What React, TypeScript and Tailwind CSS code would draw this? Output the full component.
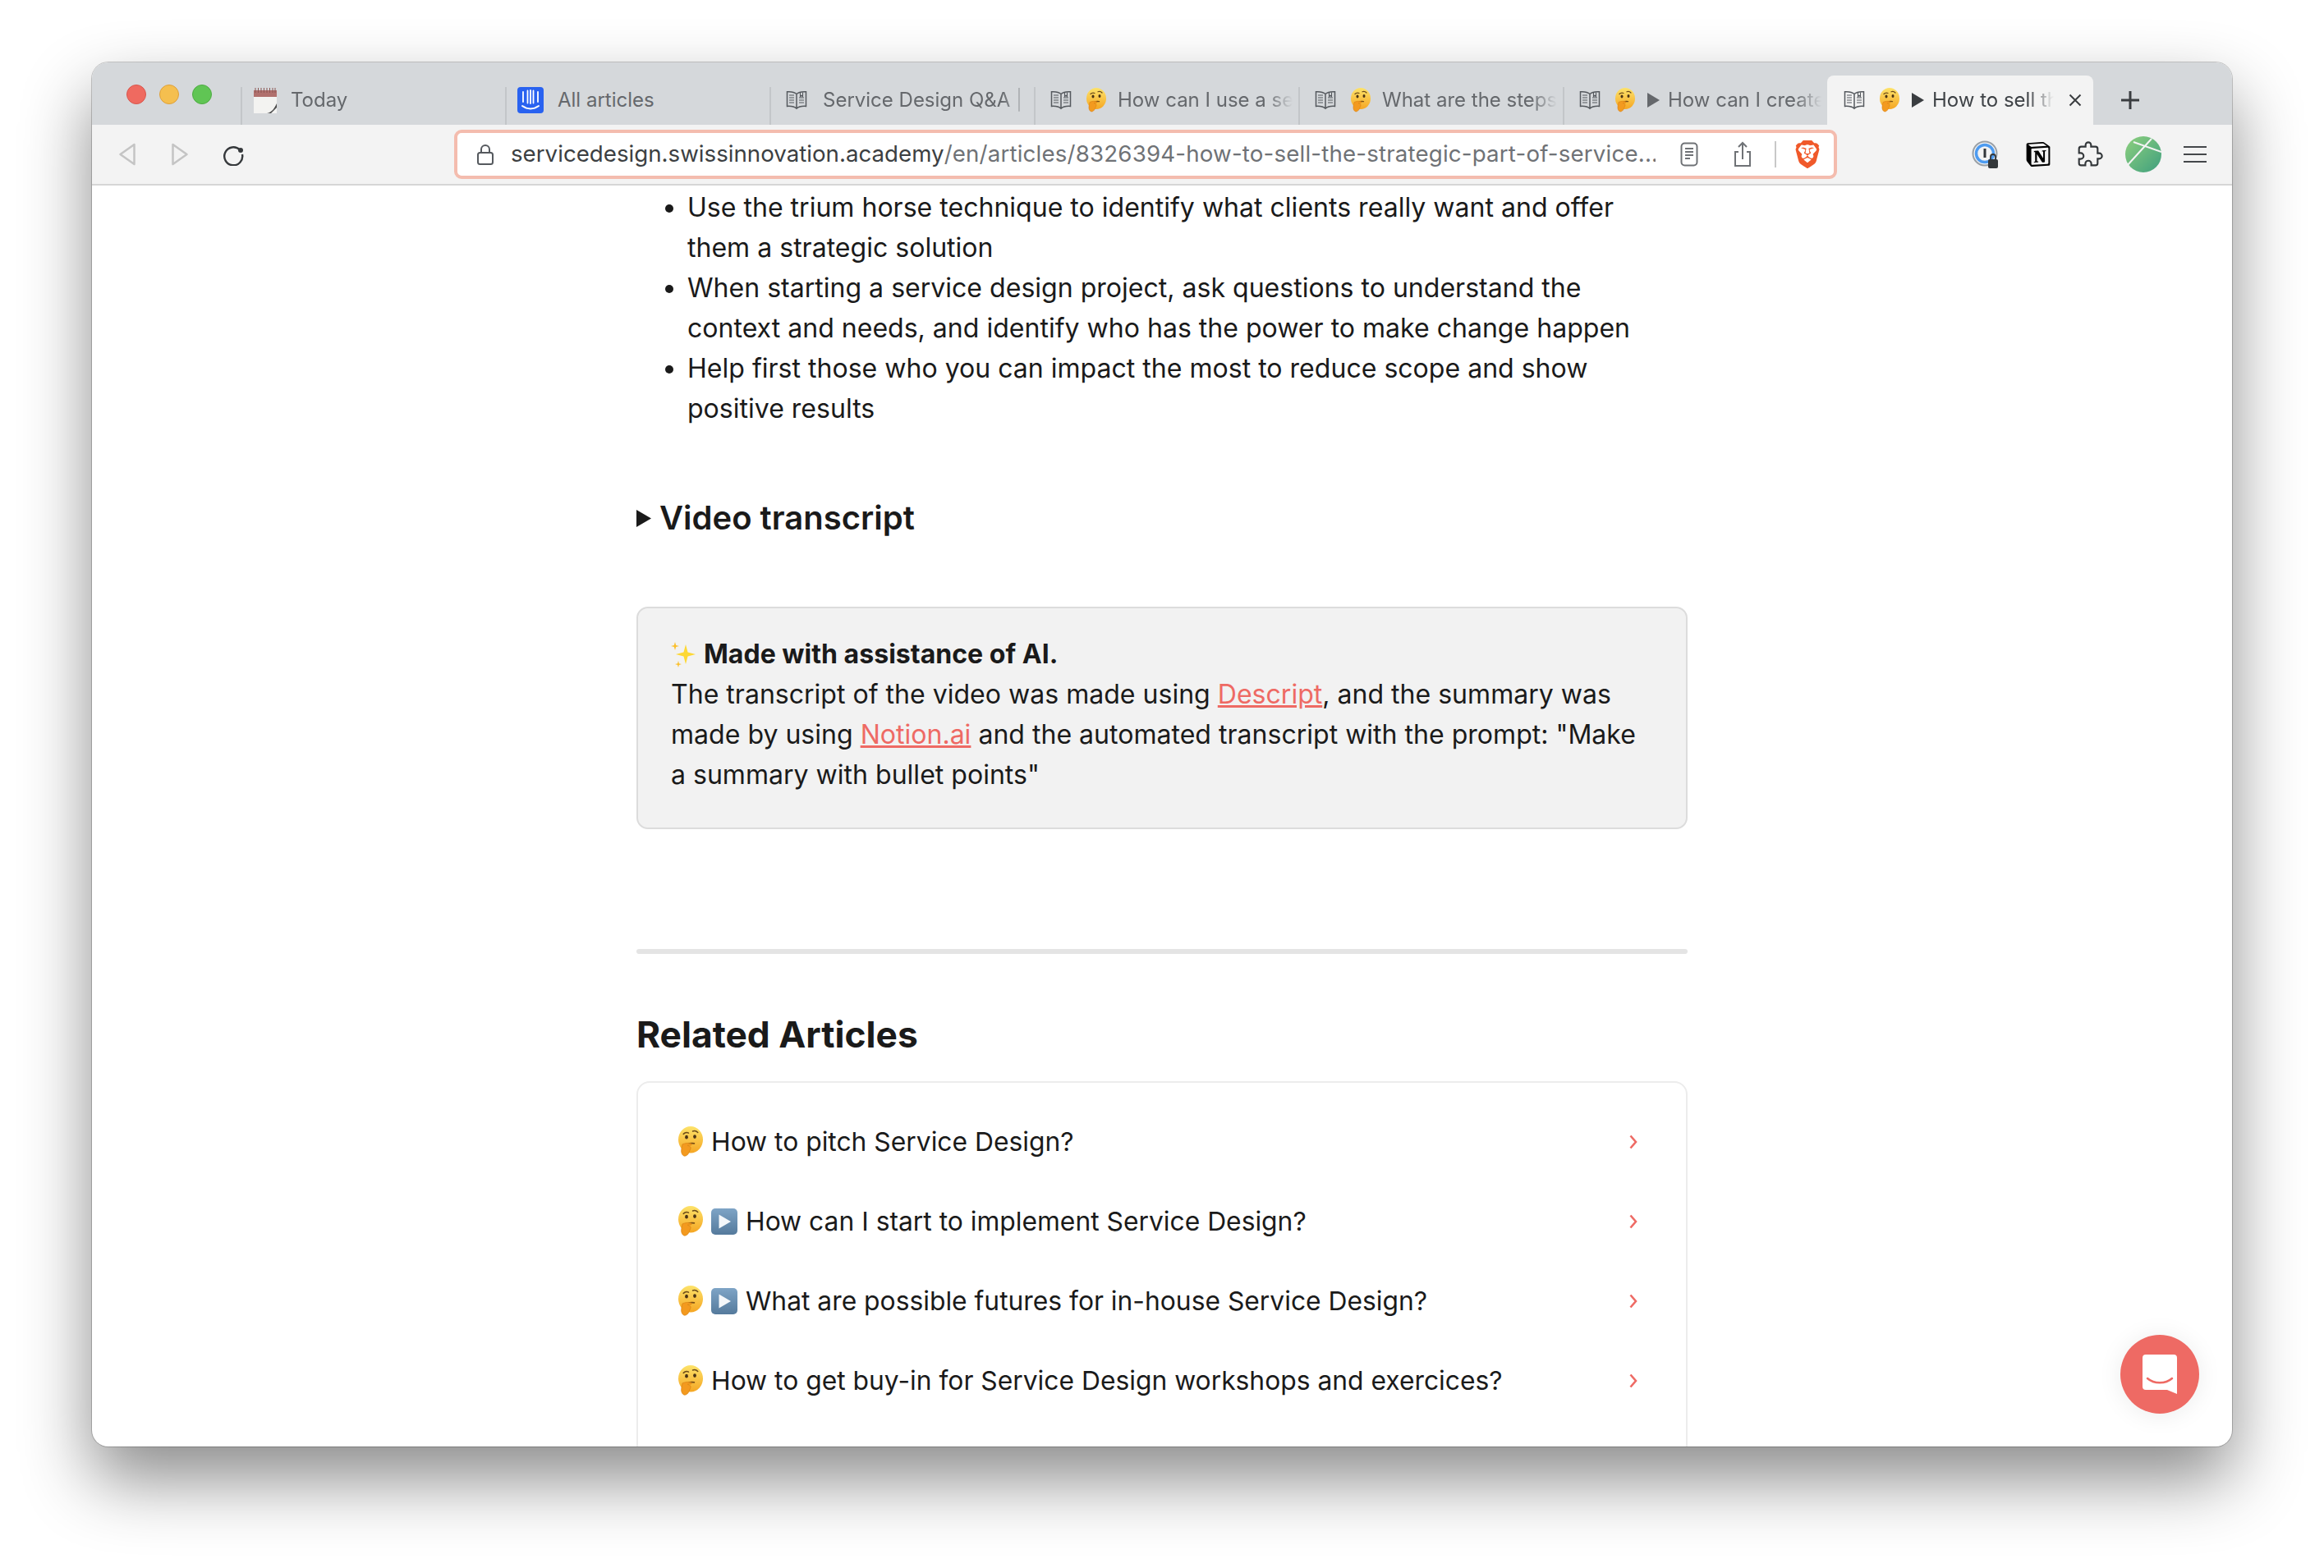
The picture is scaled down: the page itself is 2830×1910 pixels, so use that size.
import { SiBrave, SiNotion } from "react-icons/si";

function Book() {
  return (
    <svg width="26" height="24" viewBox="0 0 26 24" fill="none" stroke="#55595e" strokeWidth="1.5" className="shrink-0">
      <path d="M13 4.5C10.5 2.2 6 1.5 1.5 1.8v17.6c4.5-.3 9 .4 11.5 2.8 2.5-2.4 7-3.1 11.5-2.8V1.8C20 1.5 15.5 2.2 13 4.5zM13 4.5v17.7" />
      <path d="M4 6h6M4 9h6M4 12h6M4 15h6M16 9h6M16 12h6M16 15h6" strokeWidth="1.2" />
      <path d="M17.5 2.5v5l1.5-1.2 1.5 1.2v-5" strokeWidth="1.1" />
    </svg>
  );
}

function Thinking({ size = 24 }: { size?: number }) {
  return (
    <svg width={size} height={size * 1.25} viewBox="0 0 24 30" className="shrink-0">
      <defs>
        <linearGradient id="faceGrad" x1="0" y1="0" x2="0" y2="1">
          <stop offset="0" stopColor="#fde36a" />
          <stop offset="1" stopColor="#f5a623" />
        </linearGradient>
      </defs>
      <ellipse cx="12" cy="13" rx="12" ry="13" fill="url(#faceGrad)" />
      <path d="M5 7.5c1.5-1.6 3.2-1.8 5-1M14 4.8c2-.8 3.6-.3 5 1.2" stroke="#6b4a1a" strokeWidth="1.2" fill="none" strokeLinecap="round" />
      <ellipse cx="8" cy="10.5" rx="1.5" ry="1.9" fill="#4a3315" />
      <ellipse cx="16" cy="10" rx="1.5" ry="1.9" fill="#4a3315" />
      <path d="M9 17.5c2-1 4-1.2 6.5-.8" stroke="#7b4f16" strokeWidth="1.3" fill="none" strokeLinecap="round" />
      <path d="M4 17.5c2.5-1.2 6-1.6 8.5-.7.9.4.5 1.6-.5 1.6l-3 .1 2.4 1.2c1 .5.8 1.7.3 2.6l-1.4 3.4c-.8 1.9-2.6 3.3-4.2 3.3C4 28.5 2.5 26 3 22.5z" fill="#f39a1f" stroke="#d67f12" strokeWidth=".5" />
    </svg>
  );
}

function PlayBox() {
  return (
    <svg width="32" height="32" viewBox="0 0 32 32" className="shrink-0">
      <defs>
        <linearGradient id="playGrad" x1="0" y1="0" x2="0" y2="1">
          <stop offset="0" stopColor="#7ea4c6" />
          <stop offset="1" stopColor="#557a9c" />
        </linearGradient>
      </defs>
      <rect x="0" y="0" width="32" height="32" rx="5" fill="url(#playGrad)" />
      <path d="M9.5 7.5 24 16 9.5 24.5z" fill="#f4f7fa" />
    </svg>
  );
}

function Tab({
  icon, title, thinking, play, active
}: { icon?: React.ReactNode; title: string; thinking?: boolean; play?: boolean; active?: boolean }) {
  return (
    <div className={active
      ? "w-[324px] h-[60px] bg-[#f3f3f3] rounded-t-[8px] flex items-center pl-[20px] pr-[14px] text-[#3f4347] shrink-0"
      : "w-[322px] h-[46px] border-l-2 border-[#c3c6c9] flex items-center pl-[18px] pr-[7px] pb-[14px] text-[#65686c] shrink-0 first:border-transparent"}>
      {icon ?? <Book />}
      {thinking && <span className="ml-[18px]"><Thinking /></span>}
      {play && (
        <svg width="15" height="20" viewBox="0 0 15 20" className="ml-[15px] shrink-0">
          <path d="M0 1 15 10 0 19z" fill={active ? "#3a3d40" : "#65686c"} />
        </svg>
      )}
      <span className={`${play ? "ml-[10px]" : thinking ? "ml-[14px]" : "ml-[19px]"} flex-1 overflow-hidden whitespace-nowrap text-[24px] [mask-image:linear-gradient(to_left,transparent,black_32px)]`}>
        {title}
      </span>
      {active && (
        <svg width="16" height="16" viewBox="0 0 16 16" className="ml-[18px] shrink-0">
          <path d="M1.5 1.5 14.5 14.5M14.5 1.5 1.5 14.5" stroke="#3a3d40" strokeWidth="2" />
        </svg>
      )}
    </div>
  );
}

function Related({ text, play }: { text: string; play?: boolean }) {
  return (
    <div className="h-[97px] flex items-center pl-[49px] pr-[59px] gap-[10px] text-[31.8px]">
      <Thinking size={30} />
      {play && <PlayBox />}
      <span className="flex-1">{text}</span>
      <svg width="10" height="18" viewBox="0 0 10 18" fill="none" stroke="#ee6a64" strokeWidth="2.6" className="shrink-0">
        <path d="M1.5 1.5 8 9l-6.500 7.500" />
      </svg>
    </div>
  );
}

export default function App() {
  return (
    <div className="w-[2830px] h-[1910px] bg-white pt-[76px] pl-[112px] overflow-hidden font-['Inter',sans-serif]">
      <div className="relative w-[2606px] h-[1686px] rounded-[20px] overflow-hidden flex flex-col bg-white shadow-[0_40px_84px_rgba(0,0,0,0.46),0_0_0_1px_rgba(0,0,0,0.2)]">
        {/* tab strip */}
        <div className="h-[76px] bg-[#d5d8db] flex items-end shrink-0">
          <div className="w-[181px] self-center flex items-center gap-[16px] pl-[42px] mt-[2px] shrink-0">
            <span className="w-6 h-6 rounded-full bg-[#ef6a60] border border-[#d9564d]" />
            <span className="w-6 h-6 rounded-full bg-[#f5bf4f] border border-[#dea03a]" />
            <span className="w-6 h-6 rounded-full bg-[#60c554] border border-[#4eab43]" />
          </div>
          <Tab title="Today" icon={
            <svg width="28" height="32" viewBox="0 0 28 32" className="shrink-0 ml-[-4px] mr-[-2px]">
              <rect x="0" y="5" width="28" height="27" fill="#f3f3f1" />
              <rect x="0" y="4" width="28" height="8" fill="#b0706d" />
              <path d="M2 1v6M5.500 1v6M9 1v6M12.500 1v6M16 1v6M19.500 1v6M23 1v6M26 1v6" stroke="#8a5553" strokeWidth="1" />
              <path d="M16 32c6-1 9-6 12-12v5l-7 7z" fill="#4d4d4d" />
            </svg>
          } />
          <div className="w-[322px] h-[46px] border-l-2 border-[#c3c6c9] flex items-center pl-[13px] pb-[14px] text-[#65686c] shrink-0">
            <svg width="32" height="32" viewBox="0 0 32 32" className="shrink-0">
              <rect width="32" height="32" rx="4" fill="#2962f0" />
              <path d="M7 6v12M12.500 4.500v15M19.500 4.500v15M25 6v12M16 4v16" stroke="#fff" strokeWidth="1.8" strokeLinecap="round" />
              <path d="M6 23c6 4.500 14 4.500 20 0" stroke="#fff" strokeWidth="2" fill="none" strokeLinecap="round" />
            </svg>
            <span className="ml-[17px] text-[24px]">All articles</span>
          </div>
          <Tab title="Service Design Q&A | Service" />
          <Tab title="How can I use a service" thinking />
          <Tab title="What are the steps to" thinking />
          <Tab title="How can I create a" thinking play />
          <Tab title="How to sell the" thinking play active />
          <svg width="24" height="24" viewBox="0 0 24 24" className="ml-[33px] mb-[18px] shrink-0">
            <path d="M12 1v22M1 12h22" stroke="#3a3d40" strokeWidth="3" />
          </svg>
        </div>

        {/* toolbar */}
        <div className="h-[74px] bg-[#f3f3f3] border-b-2 border-[#d6d6d6] flex items-center shrink-0 pb-[1px]">
          <div className="w-[441px] flex items-center pl-[32px] shrink-0">
            <svg width="22" height="28" viewBox="0 0 22 28" fill="none" stroke="#c4c4c4" strokeWidth="2.5" strokeLinejoin="round">
              <path d="M19.500 2 2.500 14l17 12z" />
            </svg>
            <svg width="22" height="28" viewBox="0 0 22 28" fill="none" stroke="#c4c4c4" strokeWidth="2.5" strokeLinejoin="round" className="ml-[42px]">
              <path d="M2.500 2l17 12-17 12z" />
            </svg>
            <svg width="28" height="28" viewBox="0 0 28 28" fill="none" className="ml-[40px]">
              <path d="M22 8.500A11 11 0 1 0 25 14" stroke="#36393c" strokeWidth="2.4" />
              <circle cx="23" cy="9" r="3" fill="#36393c" />
            </svg>
          </div>
          <div className="w-[1684px] h-[60px] bg-white border-[4px] border-[#f4bcae] rounded-[9px] flex items-center pl-[23px] shrink-0">
            <svg width="22" height="26" viewBox="0 0 22 26" fill="none" stroke="#55595e" strokeWidth="2" className="shrink-0">
              <rect x="2" y="11" width="18" height="14" rx="2.500" />
              <path d="M6 11V7a5 5 0 0 1 10 0v4" />
            </svg>
            <div className="ml-[20px] w-[1394px] text-[27.7px] whitespace-nowrap overflow-hidden text-[#3c3f42]">
              servicedesign.swissinnovation.academy<span className="text-[#6f7276] tracking-[0.17px]">/en/articles/8326394-how-to-sell-the-strategic-part-of-service...</span>
            </div>
            <svg width="22" height="30" viewBox="0 0 22 30" fill="none" stroke="#6f7276" strokeWidth="2" className="ml-[30px] shrink-0">
              <rect x="1.500" y="1.500" width="19" height="27" rx="4" />
              <path d="M6 8h10M6 12h10M6 16h10M6 20h6" />
            </svg>
            <svg width="22" height="32" viewBox="0 0 22 32" fill="none" stroke="#6f7276" strokeWidth="2" className="ml-[43px] shrink-0">
              <path d="M6 13H2v17h18V13h-4M11 22V2M6 7l5-5 5 5" />
            </svg>
            <div className="ml-[28px] w-[2px] h-[32px] bg-[#c8c8c8] shrink-0" />
            <SiBrave size={34} className="ml-[21px] text-[#f0592a] shrink-0" />
          </div>
          <div className="flex items-center ml-[164px]">
            <svg width="34" height="36" viewBox="0 0 34 36" fill="none" className="shrink-0">
              <circle cx="16" cy="17" r="14.500" stroke="#9aa0a6" strokeWidth="2" />
              <circle cx="16" cy="17" r="10.500" stroke="#4d9bf0" strokeWidth="3.500" />
              <path d="M16 11v11" stroke="#33373a" strokeWidth="3" />
              <rect x="20" y="24" width="12" height="11" rx="2" fill="#33373a" />
              <path d="M23 24v-3a3 3 0 0 1 6 0v3" stroke="#33373a" strokeWidth="1.800" />
            </svg>
            <SiNotion size={30} className="ml-[32px] text-black shrink-0" />
            <svg width="32" height="32" viewBox="0 0 24 24" fill="none" stroke="#33373a" strokeWidth="1.600" className="ml-[32px] shrink-0">
              <path d="M20.500 11H19V7c0-1.100-.9-2-2-2h-4V3.500C13 2.120 11.880 1 10.500 1S8 2.120 8 3.500V5H4c-1.100 0-1.990.9-1.990 2v3.800H3.500c1.490 0 2.700 1.210 2.700 2.700s-1.210 2.700-2.700 2.700H2V20c0 1.100.9 2 2 2h3.800v-1.500c0-1.490 1.210-2.700 2.700-2.700 1.490 0 2.700 1.210 2.700 2.700V22H17c1.100 0 2-.9 2-2v-4h1.500c1.380 0 2.500-1.120 2.500-2.500S21.880 11 20.500 11z" />
            </svg>
            <svg width="44" height="44" viewBox="0 0 44 44" className="ml-[27px] shrink-0">
              <defs>
                <linearGradient id="avatarGrad" x1="0" y1="0" x2="1" y2="1">
                  <stop offset="0" stopColor="#8ed07e" />
                  <stop offset="1" stopColor="#3f9f7e" />
                </linearGradient>
              </defs>
              <circle cx="22" cy="22" r="22" fill="url(#avatarGrad)" />
              <path d="M10 7 44 19M32 3 2 36" stroke="#f3f3f3" strokeWidth="2" />
            </svg>
            <svg width="28" height="22" viewBox="0 0 28 22" className="ml-[27px] shrink-0">
              <path d="M0 2h28M0 11h28M0 20h28" stroke="#44474a" strokeWidth="2.200" />
            </svg>
          </div>
        </div>

        {/* page */}
        <div className="flex-1 overflow-hidden">
          <div className="mx-auto w-[1280px] text-[#1a1a1a] text-[32.05px] leading-[49px]">
            <ul className="list-disc pl-[62px] pt-[2px] w-[1241px]">
              <li>Use the trium horse technique to identify what clients really want and offer them a strategic solution</li>
              <li>When starting a service design project, ask questions to understand the context and needs, and identify who has the power to make change happen</li>
              <li>Help first those who you can impact the most to reduce scope and show positive results</li>
            </ul>

            <div className="mt-[81px] flex items-center h-[54px]">
              <svg width="18" height="21" viewBox="0 0 18 21" className="shrink-0 mt-[3px]">
                <path d="M0 0 18 10.500 0 21z" fill="#1a1a1a" />
              </svg>
              <span className="ml-[10px] text-[40px] font-semibold">Video transcript</span>
            </div>

            <div className="mt-[82px] h-[271px] bg-[#f2f2f2] border-2 border-[#dcdcdc] rounded-[14px] pt-[31px] px-[40px]">
              <div className="flex items-center">
                <svg width="30" height="36" viewBox="0 0 30 36" className="shrink-0">
                  <path d="M18 6l2.500 9.500L30 18l-9.500 2.500L18 30l-2.500-9.500L6 18l9.500-2.500z" fill="#fdd835" />
                  <path d="M5 3l1.200 4L10 8 6.200 9 5 13 3.800 9 0 8l3.800-1z" fill="#fbc02d" />
                  <path d="M9 26l.9 3.300L13 30l-3.100.9L9 34l-.9-3.100L5 30l3.100-.7z" fill="#fbc02d" />
                </svg>
                <b className="ml-[10px] font-bold">Made with assistance of AI.</b>
              </div>
              <p>
                The transcript of the video was made using <a className="text-[#ee6a64] underline">Descript</a>, and the summary was made by using <a className="text-[#ee6a64] underline">Notion.ai</a> and the automated transcript with the prompt: "Make a summary with bullet points"
              </p>
            </div>

            <div className="mt-[146px] h-[6px] rounded-full bg-[#e4e4e4]" />
            <h2 className="mt-[70px] text-[44.3px] leading-[56px] font-bold">Related Articles</h2>
            <div className="mt-[29px] h-[500px] border-2 border-[#ececec] rounded-[16px] pt-[23px]">
              <Related text="How to pitch Service Design?" />
              <Related play text="How can I start to implement Service Design?" />
              <Related play text="What are possible futures for in-house Service Design?" />
              <Related text="How to get buy-in for Service Design workshops and exercices?" />
            </div>
          </div>
        </div>

        {/* chat launcher */}
        <div className="absolute left-[2470px] top-[1550px] w-[96px] h-[96px] rounded-full bg-[#ee6a64] shadow-[0_2px_30px_rgba(0,0,0,0.08)] flex items-center justify-center">
          <svg width="42" height="48" viewBox="0 0 42 48">
            <path d="M4 0h34a4 4 0 0 1 4 4v44l-12-5H4a4 4 0 0 1-4-4V4a4 4 0 0 1 4-4z" fill="#fff" />
            <path d="M6 29c8 7 22 7 30 0" stroke="#ee6a64" strokeWidth="2.500" fill="none" strokeLinecap="round" />
          </svg>
        </div>
      </div>
    </div>
  );
}
